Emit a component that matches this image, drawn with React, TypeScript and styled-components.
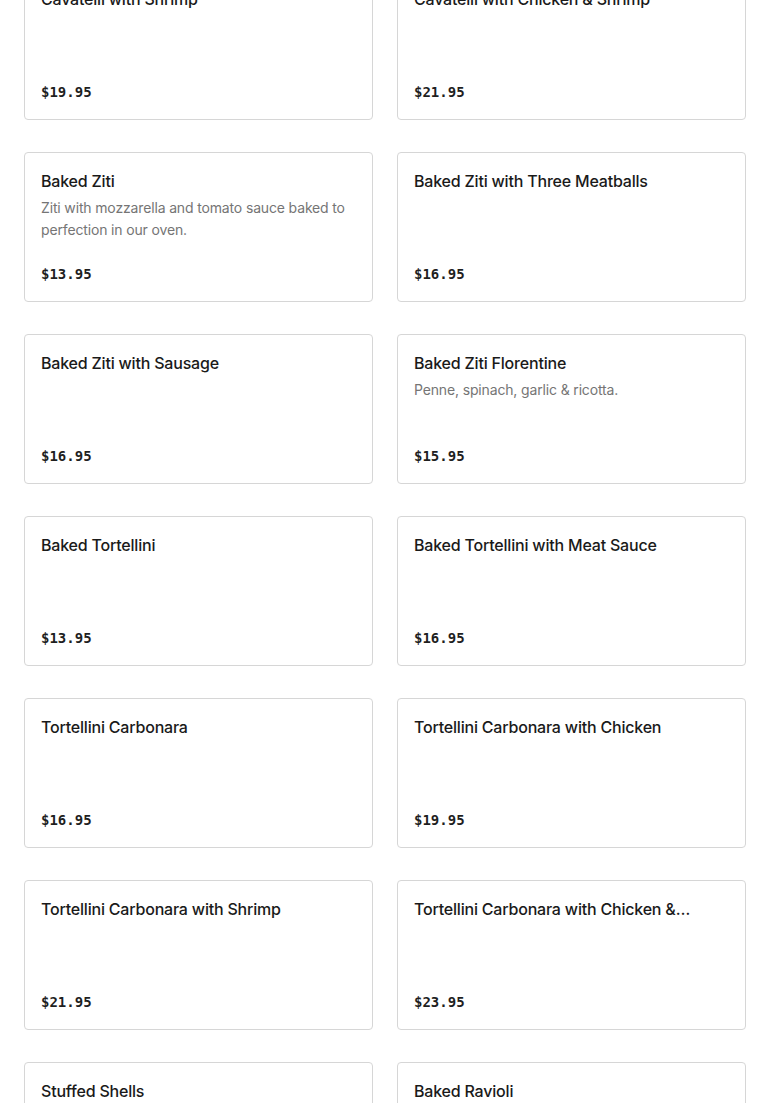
import React from "react";
import styled, { createGlobalStyle } from "styled-components";

const Global = createGlobalStyle`
  html, body { margin: 0; padding: 0; background: #ffffff; }
  body { font-family: Inter, "Liberation Sans", sans-serif; -webkit-font-smoothing: antialiased; }
  * { box-sizing: border-box; }
`;

const Page = styled.div`
  padding: 0 24px;
  margin-top: -30px;
`;

const Grid = styled.div`
  display: grid;
  grid-template-columns: 1fr 1fr;
  column-gap: 24px;
  row-gap: 32px;
`;

const Card = styled.div`
  display: flex;
  flex-direction: column;
  min-height: 150px;
  padding: 16px 16px 15px;
  border: 1px solid #d6d6d6;
  border-radius: 4px;
  background: #fff;
  min-width: 0;
`;

const Title = styled.div`
  font-size: 16px;
  line-height: 24px;
  font-weight: 500;
  letter-spacing: -0.2px;
  color: #1a1a1a;
  white-space: nowrap;
  overflow: hidden;
  text-overflow: ellipsis;
  padding-right: 37px;
`;

const Desc = styled.div`
  margin-top: 4px;
  font-size: 14px;
  line-height: 22px;
  letter-spacing: -0.15px;
  color: #757575;
`;

const Price = styled.div`
  margin-top: auto;
  padding-top: 16px;
  font-family: "DejaVu Sans Mono", "Liberation Mono", monospace;
  font-size: 14px;
  line-height: 24px;
  font-weight: 700;
  color: #1f1f1f;
`;

const items: { t: string; d?: string; p: string }[] = [
  { t: "Cavatelli with Shrimp", p: "$19.95" },
  { t: "Cavatelli with Chicken & Shrimp", p: "$21.95" },
  { t: "Baked Ziti", d: "Ziti with mozzarella and tomato sauce baked to perfection in our oven.", p: "$13.95" },
  { t: "Baked Ziti with Three Meatballs", p: "$16.95" },
  { t: "Baked Ziti with Sausage", p: "$16.95" },
  { t: "Baked Ziti Florentine", d: "Penne, spinach, garlic & ricotta.", p: "$15.95" },
  { t: "Baked Tortellini", p: "$13.95" },
  { t: "Baked Tortellini with Meat Sauce", p: "$16.95" },
  { t: "Tortellini Carbonara", p: "$16.95" },
  { t: "Tortellini Carbonara with Chicken", p: "$19.95" },
  { t: "Tortellini Carbonara with Shrimp", p: "$21.95" },
  { t: "Tortellini Carbonara with Chicken & Shrimp", p: "$23.95" },
  { t: "Stuffed Shells", p: "$14.95" },
  { t: "Baked Ravioli", p: "$14.95" },
];

export default function App() {
  return (
    <>
      <Global />
      <Page>
        <Grid>
          {items.map((it, i) => (
            <Card key={i}>
              <Title>{it.t}</Title>
              {it.d && <Desc>{it.d}</Desc>}
              <Price>{it.p}</Price>
            </Card>
          ))}
        </Grid>
      </Page>
    </>
  );
}
